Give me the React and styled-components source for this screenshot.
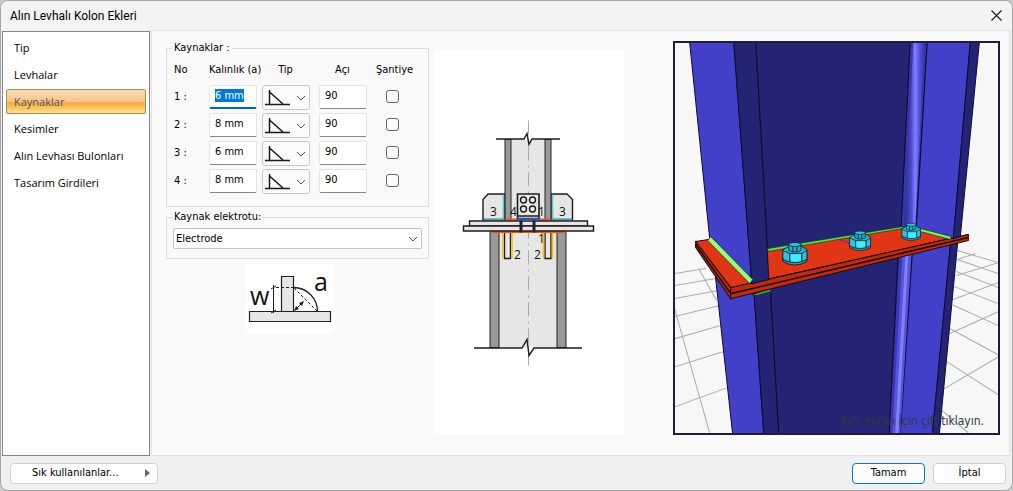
import React, {useEffect, useRef, useState} from 'react';
import styled, {createGlobalStyle} from 'styled-components'

const tabs = ['Tip', 'Levhalar', 'Kaynaklar', 'Kesimler', 'Alın Levhası Bulonları', 'Tasarım Girdileri']

const startWelds = [
    {no: 1, size: '6 mm', angle: '90', site: false},
    {no: 2, size: '8 mm', angle: '90', site: false},
    {no: 3, size: '6 mm', angle: '90', site: false},
    {no: 4, size: '8 mm', angle: '90', site: false},
]

// floor grid lines on both sides of the column, x1 y1 x2 y2
const floorLines = [
    [675, 273, 706, 268], [675, 285, 716, 278], [675, 298, 717, 290], [675, 316, 719, 305],
    [675, 338, 720, 325], [675, 366, 723, 351], [675, 406, 727, 387], [675, 308, 710, 432],
    [699, 268, 717, 300],
    [957, 250, 998, 262], [957, 259, 998, 273], [956, 271, 998, 287], [954, 286, 998, 303],
    [952, 304, 998, 325], [950, 328, 998, 354], [947, 361, 998, 394], [941, 409, 968, 432],
    [957, 259, 975, 253], [956, 275, 998, 262], [952, 299, 998, 282], [949, 333, 998, 311],
    [942, 389, 998, 356],
]

function Chevron() {
    return (
        <ChevronIcon viewBox="0 0 10 6" aria-hidden="true">
            <path d="M1 1l4 4 4-4" fill="none" stroke="#555" />
        </ChevronIcon>
    )
}

function Bolt({x, y, s}) {
    return (
        <g transform={`translate(${x} ${y}) scale(${s})`} stroke="#0a1c20" strokeWidth="0.8">
            <path d="M-12 -5L-6 -8L7 -8L12 -5V5L6 9H-6L-12 5Z" fill="#27b3cf" />
            <path d="M-12 -4L-5 -1V8L-12 5Z" fill="#2fc3dd" />
            <path d="M-5 -1H7V8H-5Z" fill="#45e8ff" />
            <path d="M7 -1L12 -4V5L7 8Z" fill="#2fc3dd" />
            <path d="M-12 5Q0 11 12 5V7Q0 14 -12 7Z" fill="#2796ae" />
            <path d="M-6 -10V-4Q0 -1 6 -4V-10Z" fill="#2aa9c2" />
            <path d="M-2 -10V-3M2 -10V-3" />
            <ellipse cx="0" cy="-10" rx="6" ry="2" fill="#2fc3dd" />
        </g>
    )
}

function ModelView() {
    return (
        <svg viewBox="675 43 323 389" preserveAspectRatio="xMidYMid slice" role="img" aria-label="3D">
            <defs>
                <linearGradient id="fillet">
                    <stop offset="0" stopColor="#2c2c94" />
                    <stop offset="0.35" stopColor="#4a48d0" />
                    <stop offset="0.55" stopColor="#8280ff" />
                    <stop offset="0.75" stopColor="#5552e0" />
                    <stop offset="1" stopColor="#3836ac" />
                </linearGradient>
            </defs>
            <g stroke="#abadab">
                {floorLines.map((l, i) => <line key={i} x1={l[0]} y1={l[1]} x2={l[2]} y2={l[3]} />)}
            </g>
            {/* lower column */}
            <g stroke="#0c0c30">
                <path d="M714 260L733 434H764L752 260Z" fill="#4240c8" />
                <path d="M752 260L764 434H779L769 260Z" fill="#242474" />
                <path d="M769 260L779 434H889L899 230Z" fill="#242474" />
                <path d="M899 240L889 434H900L913 240Z" fill="#3a38b4" />
                <path d="M913 240L900 434H932L951 235Z" fill="#4240c8" />
                <path d="M951 235L932 434H939L958 235Z" fill="#242474" />
            </g>
            <path d="M903 240L892 434H900L912 240Z" fill="#5653dc" />
            <path d="M906 240L895 434H898L909 240Z" fill="#8280ff" />
            <path d="M752 294L757 295L771 291V288Z" fill="#46a040" stroke="#0c2010" strokeWidth="0.7" />
            {/* end plates */}
            <g stroke="#200a06" strokeLinejoin="round">
                <path d="M696 241L709 239L768 249L903 227L921 229L951 238L968 234L731 287Z" fill="#e03616" />
                <path d="M696 241L731 287V298L696 247Z" fill="#bd2c12" />
                <path d="M731 287L968 234V240L731 298Z" fill="#bd2c12" />
                <path d="M696 244L731 293L968 237" fill="none" strokeWidth="1.6" />
            </g>
            {/* upper column */}
            <g stroke="#0c0c30">
                <path d="M690 42L710 238L752 283L734 42Z" fill="#4240c8" />
                <path d="M734 42L752 283L769 279L756 42Z" fill="#242474" />
                <path d="M756 42L768 249L901 227L910 42Z" fill="#242474" />
                <path d="M910 42L901 227L916 228L927 42Z" fill="#3836ac" />
                <path d="M927 42L916 228L953 238L970 42Z" fill="#4240c8" />
                <path d="M970 42L953 238L960 236L979 42Z" fill="#242474" />
            </g>
            <path d="M913 43L904 227L915 228L924 43Z" fill="url(#fillet)" />
            <g fill="#7ff06c" stroke="#123a10" strokeWidth="0.7">
                <path d="M711 236L753 279L750 283L708 240Z" fill="#98fa80" />
                <path d="M768 248L903 226V228L768 251Z" fill="#62d850" />
                <path d="M920 228L951 236L950 239L920 231Z" />
            </g>
            <path d="M840 239L850 243" stroke="#4b20e0" strokeDasharray="3 1" />
            <Bolt x={795} y={254} s={1} />
            <Bolt x={860} y={241} s={0.87} />
            <Bolt x={911} y={232} s={0.77} />
        </svg>
    )
}

function JointDrawing() {
    return (
        <svg viewBox="434 50 190 384" role="img" aria-label="Kolon eki">
            <g fill="#e6e6e6">
                <path d="M505 139H551V220H505Z" />
                <path d="M490 231H566V347H490Z" />
            </g>
            <g fill="#999" stroke="#222">
                <path d="M505 139H511V219H505ZM545 139H551V219H545Z" />
                <path d="M490 231H499V347H490ZM557 231H566V347H557Z" />
            </g>
            <path d="M528.5 120V365" stroke="#aaa" strokeDasharray="14 5 2 5" />
            <g fill="none" stroke="#1c1c1c" strokeWidth="1.4">
                <path d="M496 138.500H524L527 133L529 144L532 138.500H560" />
                <path d="M474 347.500H522L527 339L529 355L534 347.500H582" />
            </g>
            <g fill="#e6e6e6" stroke="#1c1c1c" strokeWidth="1.4">
                <path d="M483 219V199L488 193.500H504.500V219Z" />
                <path d="M551.500 219V193.500H567L572.500 199V219Z" />
                <path d="M504.500 231H510.500V258H504.500ZM545 231H551V258H545Z" />
            </g>
            <path d="M503.500 194V218.500H484M552.500 194V218.500H572" fill="none" stroke="#5cc8cc" strokeWidth="1.6" />
            <path d="M503 231V258M512 231V258M543.500 231V258M552.500 231V258" stroke="#fdbf1c" strokeWidth="1.8" />
            <path d="M505 219H517M539 219H551M490 231.500H566" stroke="#ee5522" strokeWidth="2" />
            <path d="M517.500 193.500H539V218H517.500Z" fill="#e6e6e6" stroke="#1c1c1c" strokeWidth="1.6" />
            <g fill="none" stroke="#1c1c1c" strokeWidth="1.4">
                <circle cx="523.500" cy="199.500" r="3" />
                <circle cx="532.500" cy="199.500" r="3" />
                <circle cx="523.500" cy="208.500" r="3" />
                <circle cx="532.500" cy="208.500" r="3" />
                <path d="M517.500 215.500H539" />
            </g>
            <path d="M517 218.500H540" stroke="#2e54b8" strokeWidth="2" />
            <g fill="#e8e4e8" stroke="#1c1c1c" strokeWidth="1.4">
                <path d="M469.500 220.500H587.500V225.500H469.500Z" />
                <path d="M463.500 225.500H593.500V230.500H463.500Z" />
            </g>
            <path d="M521 220V232M534 220V232" stroke="#222" strokeWidth="3" />
            <DrawingText x="490" y="215">3</DrawingText>
            <DrawingText x="510" y="215">4</DrawingText>
            <DrawingText x="538" y="215">1</DrawingText>
            <DrawingText x="559" y="215">3</DrawingText>
            <DrawingText x="538" y="242">1</DrawingText>
            <DrawingText x="514" y="258">2</DrawingText>
            <DrawingText x="534" y="258">2</DrawingText>
        </svg>
    )
}

function ThroatDrawing() {
    return (
        <ThroatSvg viewBox="245 264 90 70" role="img" aria-label="Kaynak kalınlığı">
            <g fill="#e6e6e6" stroke="#222" strokeWidth="1.2">
                <path d="M281.500 276.500H293.500V311.500H281.500Z" />
                <path d="M249.500 311.500H330.500V321.500H249.500Z" />
            </g>
            <g fill="none" stroke="#222">
                <path d="M293.500 287.500A24 24 0 0 1 317.500 311.500" strokeWidth="1.3" />
                <path d="M294 288L317 311M276 287.500H293" strokeDasharray="3 2" />
                <path d="M273.500 285V313M271 289L276 286M271 313L276 310M295 310L303 302" />
            </g>
            <path d="M294 311L299 309L296 306ZM304 301L299 303L302 306Z" fill="#222" />
            <LetterText x="250" y="305">w</LetterText>
            <LetterText x="314" y="291">a</LetterText>
        </ThroatSvg>
    )
}

function WeldRow(props) {
    const {weld, onWeldChange, sizeRef} = props
    return (
        <tr>
            <RowNumber scope="row">{weld.no} :</RowNumber>
            <td>
                <TextBox ref={sizeRef} name="size" aria-labelledby="col-size" value={weld.size} onChange={e => onWeldChange(weld.no, 'size', e.target.value)} />
            </td>
            <td>
                <SelectBox>
                    <TypeSelect name="type" aria-labelledby="col-type">
                        <option value="fillet" aria-label="fillet"></option>
                    </TypeSelect>
                    <WeldIcon viewBox="0 0 26 18" aria-hidden="true">
                        <path d="M0 15.500H25M4.500 1V15M4.500 3L18 15" fill="none" stroke="#1a1a1a" strokeWidth="1.5" />
                    </WeldIcon>
                    <Chevron />
                </SelectBox>
            </td>
            <td>
                <TextBox name="angle" aria-labelledby="col-angle" value={weld.angle} onChange={e => onWeldChange(weld.no, 'angle', e.target.value)} />
            </td>
            <td>
                <Check type="checkbox" name="site" aria-labelledby="col-site" checked={weld.site} onChange={e => onWeldChange(weld.no, 'site', e.target.checked)} />
            </td>
        </tr>
    )
}

function App() {
    const [active, setActive] = useState('Kaynaklar')
    const [welds, setWelds] = useState(startWelds)
    const firstSize = useRef(null)

    useEffect(() => {
        firstSize.current.focus()
        firstSize.current.select()
    }, [])

    const onWeldChange = (no, name, value) => {
        setWelds(welds.map(w => w.no === no ? {...w, [name]: value} : w))
    }

    return (
        <>
            <GlobalStyle />
            <Dialog>
                <TitleBar>
                    <h1>Alın Levhalı Kolon Ekleri</h1>
                    <CloseButton aria-label="Kapat">
                        <svg width="11" height="11" viewBox="0 0 11 11">
                            <path d="M0.500 0.500L10.500 10.500M10.500 0.500L0.500 10.500" stroke="#1a1a1a" strokeWidth="1.1" />
                        </svg>
                    </CloseButton>
                </TitleBar>
                <Body>
                    <Sidebar>
                        {tabs.map(tab => (
                            <TabButton key={tab} $active={tab === active} onClick={() => setActive(tab)}>{tab}</TabButton>
                        ))}
                    </Sidebar>
                    <Panel>
                        <FormColumn>
                            <WeldGroup>
                                <legend>Kaynaklar :</legend>
                                <WeldTable>
                                    <colgroup>
                                        <NumberCol />
                                        <SizeCol />
                                        <TypeCol />
                                        <TypeCol />
                                        <col />
                                    </colgroup>
                                    <thead>
                                        <tr>
                                            <th>No</th>
                                            <th id="col-size">Kalınlık (a)</th>
                                            <CenterHead id="col-type">Tip</CenterHead>
                                            <CenterHead id="col-angle">Açı</CenterHead>
                                            <th id="col-site">Şantiye</th>
                                        </tr>
                                    </thead>
                                    <tbody>
                                        {welds.map((weld, i) => (
                                            <WeldRow key={weld.no} weld={weld} onWeldChange={onWeldChange} sizeRef={i === 0 ? firstSize : null} />
                                        ))}
                                    </tbody>
                                </WeldTable>
                            </WeldGroup>
                            <ElectrodeGroup>
                                <legend><label htmlFor="electrode">Kaynak elektrotu:</label></legend>
                                <SelectBox>
                                    <ElectrodeSelect id="electrode">
                                        <option>Electrode</option>
                                    </ElectrodeSelect>
                                    <Chevron />
                                </SelectBox>
                            </ElectrodeGroup>
                            <ThroatDrawing />
                        </FormColumn>
                        <JointBox>
                            <JointDrawing />
                        </JointBox>
                        <Viewer>
                            <ModelView />
                            <ViewerHint>Tam ekran için çift tıklayın.</ViewerHint>
                        </Viewer>
                    </Panel>
                </Body>
                <Footer>
                    <FavoritesButton>
                        <span>Sık kullanılanlar...</span>
                        <svg width="5" height="8" viewBox="0 0 5 8"><path d="M0 0L5 4L0 8Z" fill="#666" /></svg>
                    </FavoritesButton>
                    <Actions>
                        <PushButton $primary>Tamam</PushButton>
                        <PushButton>İptal</PushButton>
                    </Actions>
                </Footer>
            </Dialog>
        </>
    )
}

const GlobalStyle = createGlobalStyle`
    * {
        box-sizing: border-box;
    }
    body {
        margin: 0;
        background: #c8c8c8;
        color: #000;
        font: 11px/14px 'DejaVu Sans Condensed', 'DejaVu Sans', sans-serif;
        font-stretch: condensed;
    }
    button, input, select {
        font: inherit;
        color: inherit;
    }
`
const Dialog = styled.main`
    display: flex;
    flex-direction: column;
    min-height: 100vh;
    border: 1px solid #a6a6a6;
    border-radius: 8px;
    background: #f0f0f0;
    overflow: hidden;
`
const TitleBar = styled.header`
    display: flex;
    align-items: center;
    justify-content: space-between;
    height: 29px;
    padding: 0 10px 0 9px;
    background: #f3f3f3;

    h1 {
        margin: 0;
        font: 12px/16px Roboto, sans-serif;
    }
`
const CloseButton = styled.button`
    display: flex;
    padding: 0;
    border: none;
    background: none;
`
const Body = styled.div`
    display: flex;
    flex: 1;
    padding-right: 2px;
`
const Sidebar = styled.nav`
    display: flex;
    flex-direction: column;
    gap: 2px;
    width: 148px;
    flex-shrink: 0;
    margin: 1px 1px 0 1px;
    padding: 3px;
    border: 1px solid #828790;
    background: white;
`
const TabButton = styled.button`
    height: 25px;
    padding: 0 7px;
    border: 1px solid ${props => props.$active ? '#a98a5c' : 'transparent'};
    border-radius: 2px;
    background: ${props => props.$active ? 'linear-gradient(#fbdcb8, #f8c48a 50%, #f5a93f 55%, #fde28a)' : 'none'};
    color: ${props => props.$active ? '#555' : '#000'};
    font: 11px/16px 'Open Sans', sans-serif;
    text-align: left;
`
const Panel = styled.section`
    display: flex;
    flex: 1;
    padding: 10px 9px 20px 14px;
    border: 1px solid #e3e3e3;
    background: #f9f9f9;
`
const FormColumn = styled.div`
    display: flex;
    flex-direction: column;
    width: 263px;
    flex-shrink: 0;
`
const Group = styled.fieldset`
    min-width: 0;
    margin: 0;
    border: 1px solid #dcdcdc;

    legend {
        padding: 0 2px;
    }
`
const WeldGroup = styled(Group)`
    height: 166px;
    padding: 8px 4px 0 5px;
`
const ElectrodeGroup = styled(Group)`
    margin-top: 3px;
    padding: 4px 6px 9px;

    legend {
        padding: 0 1px;
    }
`
const WeldTable = styled.table`
    width: 100%;
    table-layout: fixed;
    border-collapse: collapse;

    th, td {
        padding: 0;
        height: 28px;
        text-align: left;
        vertical-align: top;
        font-weight: normal;
        white-space: nowrap;
    }
    thead th {
        height: 22px;
    }
    th:first-child {
        padding-left: 2px;
    }
`
const NumberCol = styled.col`
    width: 37px;
`
const SizeCol = styled.col`
    width: 53px;
`
const TypeCol = styled.col`
    width: 57px;
`
const CenterHead = styled.th`
    && {
        padding-right: 10px;
        text-align: center;
    }
`
const RowNumber = styled.th`
    && {
        padding-top: 5px;
    }
`
const TextBox = styled.input`
    width: 48px;
    height: 24px;
    padding: 0 5px 3px;
    border: 1px solid #e5e5e5;
    border-bottom: 1px solid #868686;
    border-radius: 2px;
    background: white;
    outline: none;

    &:focus {
        border-bottom: 2px solid #0067c0;
        padding-bottom: 2px;
    }
    &::selection {
        background: #0078d7;
        color: white;
    }
`
const SelectBox = styled.div`
    position: relative;
`
const TypeSelect = styled.select`
    display: block;
    appearance: none;
    width: 48px;
    height: 25px;
    border: 1px solid #c8c8c8;
    border-radius: 3px;
    background: #fbfbfb;
`
const ElectrodeSelect = styled.select`
    display: block;
    appearance: none;
    width: 100%;
    height: 21px;
    padding: 0 2px;
    border: 1px solid #c4c4c4;
    border-radius: 2px;
    background: #fdfdfd;
`
const ChevronIcon = styled.svg`
    position: absolute;
    top: calc(50% - 3px);
    right: 4px;
    width: 10px;
    height: 6px;
    pointer-events: none;

    ${TypeSelect} ~ & {
        right: 13px;
    }
`
const WeldIcon = styled.svg`
    position: absolute;
    top: 4px;
    left: 3px;
    width: 26px;
    height: 18px;
    pointer-events: none;
`
const Check = styled.input`
    appearance: none;
    display: block;
    width: 13px;
    height: 13px;
    margin: 5px 0 0 10px;
    border: 1px solid #666;
    border-radius: 3px;
    background: #fbfbfb;

    &:checked {
        background: #0067c0;
    }
`
const ThroatSvg = styled.svg`
    width: 90px;
    height: 70px;
    align-self: center;
    margin-top: 5px;
    margin-left: -16px;
    background: white;
`
const DrawingText = styled.text`
    font: 12px 'Open Sans', sans-serif;
    fill: #111;
`
const LetterText = styled.text`
    font: 25px 'Open Sans', sans-serif;
    fill: #111;
`
const JointBox = styled.div`
    width: 190px;
    flex-shrink: 0;
    margin: 9px 49px 0 5px;
    background: white;

    svg {
        display: block;
        width: 100%;
        height: 100%;
    }
`
const Viewer = styled.div`
    position: relative;
    flex: 1;
    min-width: 0;
    border: 2px solid #1e1e38;
    background: #f7f7f7;

    svg {
        display: block;
        width: 100%;
        height: 100%;
    }
`
const ViewerHint = styled.span`
    position: absolute;
    right: 14px;
    bottom: 5px;
    color: #2b3a3e;
    font-size: 12px;
    white-space: nowrap;
`
const Footer = styled.footer`
    display: flex;
    align-items: center;
    justify-content: space-between;
    height: 34px;
    padding: 0 6px 0 9px;
`
const PushButton = styled.button`
    width: 73px;
    height: 21px;
    padding: 0;
    border: 1px solid ${props => props.$primary ? '#0078d4' : '#d0d0d0'};
    border-radius: 4px;
    background: #fdfdfd;
`
const FavoritesButton = styled(PushButton)`
    display: flex;
    align-items: center;
    justify-content: space-between;
    width: 148px;
    padding: 0 7px 0 21px;
`
const Actions = styled.div`
    display: flex;
    gap: 8px;
`
export default App;
